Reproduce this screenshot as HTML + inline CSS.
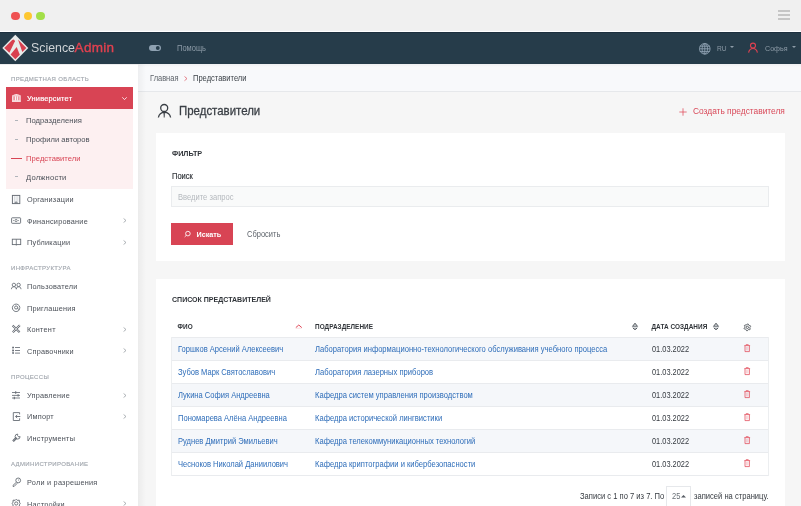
<!DOCTYPE html>
<html><head><meta charset="utf-8">
<style>
*{margin:0;padding:0}
html,body{width:801px;height:506px;overflow:hidden;background:#f6f6f6;font-family:"Liberation Sans",sans-serif}
#root{position:absolute;left:0;top:0;width:801px;height:506px;will-change:transform;background:#f6f6f6;overflow:hidden}
.a{position:absolute}
.t{position:absolute;white-space:nowrap;transform-origin:0 0}
svg{position:absolute;overflow:visible}
</style></head><body>
<div id="root">
<div class="a" style="left:0px;top:0px;width:801px;height:31px;background:#f0f0f0;"></div>
<div class="a" style="left:11.15px;top:11.6px;width:8.5px;height:8.5px;border-radius:50%;background:#ef5253"></div>
<div class="a" style="left:23.75px;top:11.6px;width:8.5px;height:8.5px;border-radius:50%;background:#fdc731"></div>
<div class="a" style="left:36.25px;top:11.6px;width:8.5px;height:8.5px;border-radius:50%;background:#a3df48"></div>
<div class="a" style="left:778px;top:10.2px;width:12px;height:1.6px;background:#c6c6c6;"></div>
<div class="a" style="left:778px;top:14.2px;width:12px;height:1.6px;background:#c6c6c6;"></div>
<div class="a" style="left:778px;top:18.2px;width:12px;height:1.6px;background:#c6c6c6;"></div>
<div class="a" style="left:0px;top:31px;width:801px;height:1px;background:#ffffff;"></div>
<div class="a" style="left:0px;top:32px;width:801px;height:32px;background:#263c4a;"></div>
<div class="a" style="left:0px;top:32px;width:801px;height:1px;background:#1c2f3e;"></div>
<svg style="left:2px;top:34.2px" width="28" height="28" viewBox="0 0 28 28" ><polygon points="13.3,0.8 26.3,14 13.3,27.2 0.3,14" fill="#e9ebea"/>
<path d="M2.2,14 L10.2,5.9 Q12.4,4.4 12.9,7.2 L7.4,18.7 Z" fill="#d8404f"/>
<path d="M8.6,20.5 L14.7,12.9 L17.8,20.7 L13.3,25.2 Z" fill="#d8404f"/>
<path d="M16,5.5 L24.3,14 L20.3,18 Z" fill="#d8404f"/></svg>
<div class="t" style="left:31.20px;top:43px;font-size:13.50px;line-height:10px;color:#cfd3d6;transform:scaleX(0.915);">Science</div>
<div class="t" style="left:74.60px;top:43px;font-size:13.50px;line-height:10px;color:#e3414f;-webkit-text-stroke:0.35px #e3414f;letter-spacing:0.3px;">Admin</div>
<svg style="left:149px;top:45px" width="12" height="6" viewBox="0 0 12 6" ><rect x="0" y="0" width="12" height="6" rx="3" fill="#8ea1b1"/><circle cx="8.8" cy="3" r="1.9" fill="#263c4a"/></svg>
<div class="t" style="left:177.00px;top:44px;font-size:8.18px;line-height:10px;color:#8d9ba7;transform:scaleX(0.92);">Помощь</div>
<svg style="left:699px;top:42.7px" width="12" height="12" viewBox="0 0 12 12" fill="none" stroke="#8ea2b2" stroke-width="0.9"><circle cx="5.8" cy="5.8" r="5.3"/><path d="M0.8,3.2H10.8M0.6,5.8H11M0.8,8.4H10.8M5.8,0.6V11"/><ellipse cx="5.8" cy="5.8" rx="2.7" ry="5.2"/></svg>
<div class="t" style="left:716.50px;top:44px;font-size:7.24px;line-height:10px;color:#8d9ba7;transform:scaleX(0.92);">RU</div>
<svg style="left:730px;top:45.8px" width="4" height="2" viewBox="0 0 4 2" ><path d="M0,0H4L2,2Z" fill="#8d9ba7"/></svg>
<svg style="left:748px;top:42px" width="10" height="11" viewBox="0 0 10 11" fill="none" stroke="#df4151" stroke-width="1.15"><circle cx="5" cy="3.6" r="2.5"/><path d="M0.6,10.6 C1.2,7.6 2.8,6.5 5,6.5 C7.2,6.5 8.8,7.6 9.4,10.6"/></svg>
<div class="t" style="left:765.00px;top:44px;font-size:7.75px;line-height:10px;color:#8d9ba7;transform:scaleX(0.92);">Софья</div>
<svg style="left:792px;top:45.8px" width="4" height="2" viewBox="0 0 4 2" ><path d="M0,0H4L2,2Z" fill="#8d9ba7"/></svg>
<div class="a" style="left:0px;top:64px;width:138px;height:442px;background:#ffffff;"></div>
<div class="a" style="left:0px;top:64px;width:138px;height:1px;background:#ededee;"></div>
<div class="t" style="left:11px;top:75px;font-size:6px;line-height:8px;color:#a4a9b0;letter-spacing:0.36px;-webkit-text-stroke:0.15px #a4a9b0">ПРЕДМЕТНАЯ ОБЛАСТЬ</div>
<div class="a" style="left:6px;top:87px;width:127px;height:22px;background:#d84454;"></div>
<svg style="left:12px;top:93px" width="9" height="9" viewBox="0 0 9 9" ><path d="M0.2,2.6 Q4.4,-0.6 8.6,2.6Z" fill="#fff" fill-opacity="0.85"/><rect x="0" y="2.5" width="8.8" height="0.9" fill="#fff"/><rect x="1.2" y="3.4" width="6.4" height="3.9" fill="#fff" fill-opacity="0.45"/><rect x="0.2" y="3.3" width="1.1" height="4.1" fill="#fff"/><rect x="3.1" y="3.3" width="0.9" height="4.1" fill="#fff"/><rect x="4.9" y="3.3" width="0.9" height="4.1" fill="#fff"/><rect x="7.5" y="3.3" width="1.1" height="4.1" fill="#fff"/><rect x="0" y="7.3" width="8.8" height="1.5" fill="#fff"/></svg>
<div class="t" style="left:27.00px;top:94px;font-size:7.40px;line-height:10px;color:#ffffff;-webkit-text-stroke:0.2px #ffffff;letter-spacing:0.2px;">Университет</div>
<svg style="left:122px;top:96.5px" width="5" height="3" viewBox="0 0 5 3" ><path d="M0.3,0.3 L2.5,2.6 L4.7,0.3" fill="none" stroke="#fff" stroke-width="0.8"/></svg>
<div class="a" style="left:6px;top:109px;width:127px;height:80px;background:#fdf0f1;"></div>
<div class="a" style="left:15px;top:120.3px;width:3px;height:0.9px;background:#b0b4ba;"></div>
<div class="a" style="left:15px;top:138.9px;width:3px;height:0.9px;background:#b0b4ba;"></div>
<div class="a" style="left:11px;top:158px;width:10.5px;height:1.3px;background:#d84454;"></div>
<div class="a" style="left:15px;top:176.4px;width:3px;height:0.9px;background:#b0b4ba;"></div>
<div class="t" style="left:26.00px;top:116px;font-size:7.60px;line-height:10px;color:#4b5058;letter-spacing:0.05px;">Подразделения</div>
<div class="t" style="left:26.00px;top:135px;font-size:7.60px;line-height:10px;color:#4b5058;letter-spacing:0.02px;">Профили авторов</div>
<div class="t" style="left:26.00px;top:154px;font-size:7.60px;line-height:10px;color:#d84454;letter-spacing:0.05px;">Представители</div>
<div class="t" style="left:26.00px;top:173px;font-size:7.60px;line-height:10px;color:#4b5058;letter-spacing:0.2px;">Должности</div>
<svg style="left:9px;top:192px" width="15" height="15" viewBox="0 0 15 15" fill="none"><rect x="3.4" y="3.4" width="7.4" height="8.2" stroke="#676d75" stroke-width="0.95"/><path d="M5.4,4.2V10.8M7.1,4.2V9.6M8.8,4.2V10.8" stroke="#c9cdd2" stroke-width="0.7"/><path d="M6.2,11.6V10.1H8V11.6" stroke="#676d75" stroke-width="0.9"/></svg>
<svg style="left:9px;top:213px" width="15" height="15" viewBox="0 0 15 15" fill="none"><rect x="2.6" y="4.8" width="9" height="5.5" rx="0.6" stroke="#676d75" stroke-width="0.9"/><circle cx="7.1" cy="7.55" r="1.15" stroke="#676d75" stroke-width="0.8"/><path d="M4.2,7.55H5M9.2,7.55H10" stroke="#676d75" stroke-width="0.8"/></svg>
<svg style="left:9px;top:234px" width="15" height="15" viewBox="0 0 15 15" fill="none"><rect x="3.3" y="5.2" width="8.4" height="5.4" stroke="#676d75" stroke-width="0.9"/><path d="M7.3,5.2V11.6" stroke="#676d75" stroke-width="0.8"/></svg>
<svg style="left:9px;top:279px" width="15" height="15" viewBox="0 0 15 15" fill="none"><path d="M2.4,10.2 C2.6,8.3 3.4,7.8 4.9,7.8 C6.3,7.8 7.1,8.3 7.3,10.2 M7.3,10.2 C7.5,8.3 8.3,7.8 9.6,7.8 C11,7.8 11.8,8.3 12,10.2" stroke="#676d75" stroke-width="0.85"/><circle cx="4.9" cy="5.9" r="1.7" stroke="#676d75" stroke-width="0.85"/><circle cx="9.6" cy="5.9" r="1.7" stroke="#676d75" stroke-width="0.85"/></svg>
<svg style="left:9px;top:300px" width="15" height="15" viewBox="0 0 15 15" fill="none"><path d="M10.6,9.2 A3.75,3.75 0 1 1 10.85,7.5" stroke="#676d75" stroke-width="0.9"/><circle cx="7.1" cy="7.5" r="1.55" stroke="#676d75" stroke-width="0.9"/><path d="M8.65,7.5 V8.4 Q8.8,9.4 9.8,9.4 Q10.85,9.3 10.85,7.5" stroke="#676d75" stroke-width="0.8"/></svg>
<svg style="left:9px;top:321px" width="15" height="15" viewBox="0 0 15 15" fill="none"><path d="M3.6,4.6 L10.6,11.2 M10.8,4.2 L3.8,11.2" stroke="#676d75" stroke-width="2.1"/><path d="M3.6,4.6 L10.6,11.2 M10.8,4.2 L3.8,11.2" stroke="#fff" stroke-width="0.7"/></svg>
<svg style="left:9px;top:343px" width="15" height="15" viewBox="0 0 15 15" fill="none"><path d="M3.2,4.5H5M3.2,7.5H5M3.2,10.1H5" stroke="#676d75" stroke-width="1.5"/><path d="M3.9,4.5V10.1" stroke="#676d75" stroke-width="0.6" stroke-opacity="0.5"/><path d="M6,4.5H11M6,7.5H11M6,10.1H11" stroke="#676d75" stroke-width="0.85"/></svg>
<svg style="left:9px;top:388px" width="15" height="15" viewBox="0 0 15 15" fill="none"><path d="M3,4.5H11M3,7.4H11M3,10H11" stroke="#676d75" stroke-width="0.85"/><path d="M6.7,3.3V5.7M9.1,6.2V8.6M5.3,8.8V11.2" stroke="#676d75" stroke-width="1.1"/></svg>
<svg style="left:9px;top:409px" width="15" height="15" viewBox="0 0 15 15" fill="none"><path d="M10.6,5.4V3.6H4.3V11.5H10.6V9.3" stroke="#676d75" stroke-width="0.9"/><path d="M11.3,7.5H6.6M8.2,6 L6.6,7.5 L8.2,9" stroke="#676d75" stroke-width="0.95"/></svg>
<svg style="left:9px;top:430px" width="15" height="15" viewBox="0 0 15 15" fill="none"><path d="M4,11.2 L7.6,7.6" stroke="#676d75" stroke-width="2.2"/><path d="M4,11.2 L7.6,7.6" stroke="#fff" stroke-width="0.6" stroke-dasharray="0.7 0.7"/><path d="M8.7,4.1 A2.5,2.5 0 1 0 11.1,6.6 L9.7,6.9 L8.6,5.6Z" stroke="#676d75" stroke-width="0.9"/></svg>
<svg style="left:9px;top:475px" width="15" height="15" viewBox="0 0 15 15" fill="none"><circle cx="9.2" cy="5.4" r="2.4" stroke="#676d75" stroke-width="0.9"/><circle cx="9.5" cy="5" r="0.5" fill="#676d75"/><path d="M7.4,7.2 L4,10.4 V11.4 H5.2 L8.3,8.2" stroke="#676d75" stroke-width="0.9"/></svg>
<svg style="left:9px;top:491px" width="15" height="15" viewBox="0 0 15 15" fill="none"><path d="M7.2,8.3 L8.2,9.3 L10.3,9.2 L10.4,11.2 L11.2,12.5 L10.4,13.8 L10.3,15.8 M7.2,8.3 L6.2,9.3 L4.1,9.2 L4,11.2 L3.2,12.5 L4,13.8 L4.1,15.8" stroke="#676d75" stroke-width="0.95"/><circle cx="7.2" cy="12.5" r="1.6" stroke="#676d75" stroke-width="0.9"/></svg>
<svg style="left:123px;top:218.3px" width="4" height="5" viewBox="0 0 4 5" ><path d="M0.6,0.5 L3,2.5 L0.6,4.5" fill="none" stroke="#8a9097" stroke-width="0.7"/></svg>
<svg style="left:123px;top:239.8px" width="4" height="5" viewBox="0 0 4 5" ><path d="M0.6,0.5 L3,2.5 L0.6,4.5" fill="none" stroke="#8a9097" stroke-width="0.7"/></svg>
<svg style="left:123px;top:326.8px" width="4" height="5" viewBox="0 0 4 5" ><path d="M0.6,0.5 L3,2.5 L0.6,4.5" fill="none" stroke="#8a9097" stroke-width="0.7"/></svg>
<svg style="left:123px;top:347.8px" width="4" height="5" viewBox="0 0 4 5" ><path d="M0.6,0.5 L3,2.5 L0.6,4.5" fill="none" stroke="#8a9097" stroke-width="0.7"/></svg>
<svg style="left:123px;top:392.8px" width="4" height="5" viewBox="0 0 4 5" ><path d="M0.6,0.5 L3,2.5 L0.6,4.5" fill="none" stroke="#8a9097" stroke-width="0.7"/></svg>
<svg style="left:123px;top:413.8px" width="4" height="5" viewBox="0 0 4 5" ><path d="M0.6,0.5 L3,2.5 L0.6,4.5" fill="none" stroke="#8a9097" stroke-width="0.7"/></svg>
<svg style="left:123px;top:500.8px" width="4" height="5" viewBox="0 0 4 5" ><path d="M0.6,0.5 L3,2.5 L0.6,4.5" fill="none" stroke="#8a9097" stroke-width="0.7"/></svg>
<div class="t" style="left:27.00px;top:195px;font-size:7.30px;line-height:10px;color:#4b5058;letter-spacing:0.24px;">Организации</div>
<div class="t" style="left:27.00px;top:217px;font-size:7.30px;line-height:10px;color:#4b5058;letter-spacing:0.24px;">Финансирование</div>
<div class="t" style="left:27.00px;top:238px;font-size:7.30px;line-height:10px;color:#4b5058;letter-spacing:0.24px;">Публикации</div>
<div class="t" style="left:11px;top:264px;font-size:6px;line-height:8px;color:#a4a9b0;letter-spacing:0.36px;-webkit-text-stroke:0.15px #a4a9b0">ИНФРАСТРУКТУРА</div>
<div class="t" style="left:27.00px;top:282px;font-size:7.30px;line-height:10px;color:#4b5058;letter-spacing:0.24px;">Пользователи</div>
<div class="t" style="left:27.00px;top:304px;font-size:7.30px;line-height:10px;color:#4b5058;letter-spacing:0.24px;">Приглашения</div>
<div class="t" style="left:27.00px;top:325px;font-size:7.30px;line-height:10px;color:#4b5058;letter-spacing:0.24px;">Контент</div>
<div class="t" style="left:27.00px;top:347px;font-size:7.30px;line-height:10px;color:#4b5058;letter-spacing:0.24px;">Справочники</div>
<div class="t" style="left:11px;top:373px;font-size:6px;line-height:8px;color:#a4a9b0;letter-spacing:0.36px;-webkit-text-stroke:0.15px #a4a9b0">ПРОЦЕССЫ</div>
<div class="t" style="left:27.00px;top:391px;font-size:7.30px;line-height:10px;color:#4b5058;letter-spacing:0.24px;">Управление</div>
<div class="t" style="left:27.00px;top:412px;font-size:7.30px;line-height:10px;color:#4b5058;letter-spacing:0.24px;">Импорт</div>
<div class="t" style="left:27.00px;top:434px;font-size:7.30px;line-height:10px;color:#4b5058;letter-spacing:0.24px;">Инструменты</div>
<div class="t" style="left:11px;top:460px;font-size:6px;line-height:8px;color:#a4a9b0;letter-spacing:0.36px;-webkit-text-stroke:0.15px #a4a9b0">АДМИНИСТРИРОВАНИЕ</div>
<div class="t" style="left:27.00px;top:478px;font-size:7.30px;line-height:10px;color:#4b5058;letter-spacing:0.24px;">Роли и разрешения</div>
<div class="t" style="left:27.00px;top:500px;font-size:7.30px;line-height:10px;color:#4b5058;letter-spacing:0.24px;">Настройки</div>
<div class="a" style="left:138px;top:64px;width:663px;height:27.5px;background:#f8f9fb;border-bottom:1px solid #e6e8eb;box-sizing:border-box"></div>
<div class="t" style="left:149.60px;top:74px;font-size:8.13px;line-height:10px;color:#5c6269;transform:scaleX(0.92);">Главная</div>
<svg style="left:184.4px;top:75.5px" width="4" height="6" viewBox="0 0 4 6" ><path d="M0.5,0.5 L3,2.6 L0.5,4.7" fill="none" stroke="#e0606c" stroke-width="0.8"/></svg>
<div class="t" style="left:193.00px;top:74px;font-size:8.20px;line-height:10px;color:#3d4349;transform:scaleX(0.92);">Представители</div>
<div class="a" style="left:138px;top:64px;width:8px;height:442px;background:linear-gradient(to right,rgba(0,0,0,0.045),rgba(0,0,0,0));"></div>
<div class="a" style="left:138px;top:64px;width:663px;height:3px;background:linear-gradient(to bottom,rgba(0,0,0,0.04),rgba(0,0,0,0));"></div>
<svg style="left:150px;top:95px" width="30" height="30" viewBox="0 0 30 30" fill="none" stroke="#3a3f45" stroke-width="1.3"><circle cx="14.2" cy="13" r="3.5"/><path d="M8.4,22.5 A6.2,6.2 0 0 1 20.6,22.5"/><path d="M13.6,17 L14.2,22.5 L14.8,17Z" fill="#3a3f45" stroke-width="0.5"/></svg>
<div class="t" style="left:179.00px;top:106px;font-size:12.44px;line-height:10px;color:#3a3f45;-webkit-text-stroke:0.3px #3a3f45;transform:scaleX(0.92);">Представители</div>
<svg style="left:679px;top:107.5px" width="8" height="8" viewBox="0 0 8 8" ><path d="M4,0.3V7.7M0.3,4H7.7" stroke="#e04a5a" stroke-width="0.75"/></svg>
<div class="t" style="left:693.00px;top:106px;font-size:9.10px;line-height:10px;color:#d94858;transform:scaleX(0.92);">Создать представителя</div>
<div class="a" style="left:156px;top:133px;width:629px;height:128px;background:#ffffff;"></div>
<div class="t" style="left:172.00px;top:149px;font-size:7.24px;line-height:10px;color:#2f3338;font-weight:700;">ФИЛЬТР</div>
<div class="t" style="left:172.00px;top:172px;font-size:8.18px;line-height:10px;color:#2f3338;-webkit-text-stroke:0.15px #2f3338;transform:scaleX(0.92);">Поиск</div>
<div class="a" style="left:171px;top:186px;width:598px;height:21px;background:#f9fafa;border:1px solid #eaecee;box-sizing:border-box"></div>
<div class="t" style="left:178.00px;top:193px;font-size:8.26px;line-height:10px;color:#b5b9be;transform:scaleX(0.92);">Введите запрос</div>
<div class="a" style="left:171px;top:223px;width:62px;height:22px;background:#d84454;"></div>
<svg style="left:183.5px;top:231px" width="7" height="7" viewBox="0 0 7 7" fill="none" stroke="#fff" stroke-width="0.85"><circle cx="3.9" cy="2.6" r="2.3"/><path d="M2.3,4.3 L0.7,5.9"/></svg>
<div class="t" style="left:196.50px;top:230px;font-size:7.21px;line-height:10px;color:#ffffff;font-weight:700;">Искать</div>
<div class="t" style="left:246.50px;top:230px;font-size:8.16px;line-height:10px;color:#5f656c;transform:scaleX(0.92);">Сбросить</div>
<div class="a" style="left:156px;top:279px;width:629px;height:227px;background:#ffffff;"></div>
<div class="t" style="left:172.00px;top:295px;font-size:7.04px;line-height:10px;color:#2f3338;font-weight:700;">СПИСОК ПРЕДСТАВИТЕЛЕЙ</div>
<div class="t" style="left:177.50px;top:322px;font-size:6.40px;line-height:10px;color:#2f3338;font-weight:700;letter-spacing:0.05px;">ФИО</div>
<svg style="left:294.5px;top:324px" width="8" height="5" viewBox="0 0 8 5" ><path d="M0.8,3.6 L3.8,1 L6.8,3.6" fill="none" stroke="#e04a5a" stroke-width="1" stroke-linejoin="round"/><path d="M1,4.2H6.6" stroke="#e04a5a" stroke-opacity="0.25" stroke-width="0.8"/></svg>
<div class="t" style="left:315.00px;top:322px;font-size:6.40px;line-height:10px;color:#2f3338;font-weight:700;letter-spacing:0.05px;">ПОДРАЗДЕЛЕНИЕ</div>
<svg style="left:628px;top:320px" width="14" height="14" viewBox="0 0 14 14" fill="none" stroke="#4d5359" stroke-width="0.95"><path d="M4.5,6.4 L7,3.2 L9.5,6.4Z" stroke-linejoin="round" fill="#c9ccd0"/><path d="M4.3,7H9.7" stroke="#b5b9be"/><path d="M5,7.9 Q7,11 9,7.9" fill="#c9ccd0"/></svg>
<div class="t" style="left:651.50px;top:322px;font-size:6.40px;line-height:10px;color:#2f3338;font-weight:700;letter-spacing:0.05px;">ДАТА СОЗДАНИЯ</div>
<svg style="left:708.5px;top:320px" width="14" height="14" viewBox="0 0 14 14" fill="none" stroke="#4d5359" stroke-width="0.95"><path d="M4.5,6.4 L7,3.2 L9.5,6.4Z" stroke-linejoin="round" fill="#c9ccd0"/><path d="M4.3,7H9.7" stroke="#b5b9be"/><path d="M5,7.9 Q7,11 9,7.9" fill="#c9ccd0"/></svg>
<svg style="left:740px;top:320px" width="14" height="14" viewBox="0 0 14 14" fill="none" stroke="#474d53" stroke-width="0.85"><path d="M7.35,3.95 L8.23,4.07 L8.62,5.14 L9.15,5.55 L10.29,5.65 L10.63,6.47 L9.90,7.35 L9.81,8.01 L10.29,9.05 L9.75,9.75 L8.62,9.56 L8.01,9.81 L7.35,10.75 L6.47,10.63 L6.08,9.56 L5.55,9.15 L4.41,9.05 L4.07,8.23 L4.80,7.35 L4.89,6.69 L4.41,5.65 L4.95,4.95 L6.07,5.14 L6.69,4.89Z" stroke-linejoin="round"/><circle cx="7.35" cy="7.35" r="1.15"/></svg>
<div class="a" style="left:171px;top:337px;width:598px;height:23px;background:#f5f7fa;border-top:1px solid #e9ebee;box-sizing:border-box"></div>
<div class="a" style="left:171px;top:360px;width:598px;height:23px;background:#ffffff;border-top:1px solid #e9ebee;box-sizing:border-box"></div>
<div class="a" style="left:171px;top:383px;width:598px;height:23px;background:#f5f7fa;border-top:1px solid #e9ebee;box-sizing:border-box"></div>
<div class="a" style="left:171px;top:406px;width:598px;height:23px;background:#ffffff;border-top:1px solid #e9ebee;box-sizing:border-box"></div>
<div class="a" style="left:171px;top:429px;width:598px;height:23px;background:#f5f7fa;border-top:1px solid #e9ebee;box-sizing:border-box"></div>
<div class="a" style="left:171px;top:452px;width:598px;height:23px;background:#ffffff;border-top:1px solid #e9ebee;box-sizing:border-box"></div>
<div class="a" style="left:171px;top:475px;width:598px;height:1px;background:#e9ebee;"></div>
<div class="a" style="left:171px;top:337px;width:1px;height:139px;background:#eceef0;"></div>
<div class="a" style="left:768px;top:337px;width:1px;height:139px;background:#eceef0;"></div>
<div class="t" style="left:178.00px;top:345px;font-size:8.23px;line-height:10px;color:#2e6db9;transform:scaleX(0.92);">Горшков Арсений Алексеевич</div>
<div class="t" style="left:315.00px;top:345px;font-size:8.28px;line-height:10px;color:#2e6db9;transform:scaleX(0.92);">Лаборатория информационно-технологического обслуживания учебного процесса</div>
<div class="t" style="left:652.00px;top:344px;font-size:8.50px;line-height:10px;color:#353a40;transform:scaleX(0.87);">01.03.2022</div>
<svg style="left:740px;top:337px" width="14" height="23" viewBox="0 0 14 23" fill="none" stroke="#e2505f" stroke-width="0.8"><path d="M6.1,8.3 V7.7 H8.3 V8.3"/><path d="M4.3,8.6 H10.1"/><path d="M5,8.8 V14.6 H9.4 V8.8"/><path d="M6.6,9.8 V13.4 M7.8,9.8 V13.4" stroke-width="0.55" stroke-opacity="0.5"/></svg>
<div class="t" style="left:178.00px;top:368px;font-size:8.23px;line-height:10px;color:#2e6db9;transform:scaleX(0.92);">Зубов Марк Святославович</div>
<div class="t" style="left:315.00px;top:368px;font-size:8.28px;line-height:10px;color:#2e6db9;transform:scaleX(0.92);">Лаборатория лазерных приборов</div>
<div class="t" style="left:652.00px;top:367px;font-size:8.50px;line-height:10px;color:#353a40;transform:scaleX(0.87);">01.03.2022</div>
<svg style="left:740px;top:360px" width="14" height="23" viewBox="0 0 14 23" fill="none" stroke="#e2505f" stroke-width="0.8"><path d="M6.1,8.3 V7.7 H8.3 V8.3"/><path d="M4.3,8.6 H10.1"/><path d="M5,8.8 V14.6 H9.4 V8.8"/><path d="M6.6,9.8 V13.4 M7.8,9.8 V13.4" stroke-width="0.55" stroke-opacity="0.5"/></svg>
<div class="t" style="left:178.00px;top:391px;font-size:8.23px;line-height:10px;color:#2e6db9;transform:scaleX(0.92);">Лукина София Андреевна</div>
<div class="t" style="left:315.00px;top:391px;font-size:8.28px;line-height:10px;color:#2e6db9;transform:scaleX(0.92);">Кафедра систем управления производством</div>
<div class="t" style="left:652.00px;top:390px;font-size:8.50px;line-height:10px;color:#353a40;transform:scaleX(0.87);">01.03.2022</div>
<svg style="left:740px;top:383px" width="14" height="23" viewBox="0 0 14 23" fill="none" stroke="#e2505f" stroke-width="0.8"><path d="M6.1,8.3 V7.7 H8.3 V8.3"/><path d="M4.3,8.6 H10.1"/><path d="M5,8.8 V14.6 H9.4 V8.8"/><path d="M6.6,9.8 V13.4 M7.8,9.8 V13.4" stroke-width="0.55" stroke-opacity="0.5"/></svg>
<div class="t" style="left:178.00px;top:414px;font-size:8.23px;line-height:10px;color:#2e6db9;transform:scaleX(0.92);">Пономарева Алёна Андреевна</div>
<div class="t" style="left:315.00px;top:414px;font-size:8.28px;line-height:10px;color:#2e6db9;transform:scaleX(0.92);">Кафедра исторической лингвистики</div>
<div class="t" style="left:652.00px;top:413px;font-size:8.50px;line-height:10px;color:#353a40;transform:scaleX(0.87);">01.03.2022</div>
<svg style="left:740px;top:406px" width="14" height="23" viewBox="0 0 14 23" fill="none" stroke="#e2505f" stroke-width="0.8"><path d="M6.1,8.3 V7.7 H8.3 V8.3"/><path d="M4.3,8.6 H10.1"/><path d="M5,8.8 V14.6 H9.4 V8.8"/><path d="M6.6,9.8 V13.4 M7.8,9.8 V13.4" stroke-width="0.55" stroke-opacity="0.5"/></svg>
<div class="t" style="left:178.00px;top:437px;font-size:8.23px;line-height:10px;color:#2e6db9;transform:scaleX(0.92);">Руднев Дмитрий Эмильевич</div>
<div class="t" style="left:315.00px;top:437px;font-size:8.28px;line-height:10px;color:#2e6db9;transform:scaleX(0.92);">Кафедра телекоммуникационных технологий</div>
<div class="t" style="left:652.00px;top:436px;font-size:8.50px;line-height:10px;color:#353a40;transform:scaleX(0.87);">01.03.2022</div>
<svg style="left:740px;top:429px" width="14" height="23" viewBox="0 0 14 23" fill="none" stroke="#e2505f" stroke-width="0.8"><path d="M6.1,8.3 V7.7 H8.3 V8.3"/><path d="M4.3,8.6 H10.1"/><path d="M5,8.8 V14.6 H9.4 V8.8"/><path d="M6.6,9.8 V13.4 M7.8,9.8 V13.4" stroke-width="0.55" stroke-opacity="0.5"/></svg>
<div class="t" style="left:178.00px;top:460px;font-size:8.23px;line-height:10px;color:#2e6db9;transform:scaleX(0.92);">Чесноков Николай Даниилович</div>
<div class="t" style="left:315.00px;top:460px;font-size:8.28px;line-height:10px;color:#2e6db9;transform:scaleX(0.92);">Кафедра криптографии и кибербезопасности</div>
<div class="t" style="left:652.00px;top:459px;font-size:8.50px;line-height:10px;color:#353a40;transform:scaleX(0.87);">01.03.2022</div>
<svg style="left:740px;top:452px" width="14" height="23" viewBox="0 0 14 23" fill="none" stroke="#e2505f" stroke-width="0.8"><path d="M6.1,8.3 V7.7 H8.3 V8.3"/><path d="M4.3,8.6 H10.1"/><path d="M5,8.8 V14.6 H9.4 V8.8"/><path d="M6.6,9.8 V13.4 M7.8,9.8 V13.4" stroke-width="0.55" stroke-opacity="0.5"/></svg>
<div class="t" style="left:580.00px;top:492px;font-size:8.25px;line-height:10px;color:#353a40;transform:scaleX(0.92);">Записи с 1 по 7 из 7. По</div>
<div class="a" style="left:666px;top:486px;width:25px;height:22px;background:#ffffff;border:1px solid #e6e8eb;box-sizing:border-box"></div>
<div class="t" style="left:671.70px;top:492px;font-size:8.20px;line-height:10px;color:#6a7077;transform:scaleX(0.92);">25</div>
<svg style="left:681px;top:494.8px" width="5" height="3" viewBox="0 0 5 3" ><path d="M0,2.5H5L2.5,0Z" fill="#555b62"/></svg>
<div class="t" style="left:694.00px;top:492px;font-size:8.26px;line-height:10px;color:#353a40;transform:scaleX(0.92);">записей на страницу.</div>
</div>
</body></html>
